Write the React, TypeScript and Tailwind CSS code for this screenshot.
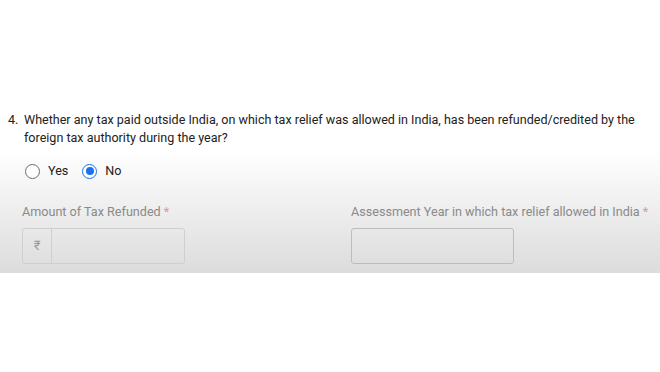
export default function App() {
  return (
    <div className="w-[660px] h-[372px] bg-white font-['Roboto','Liberation_Sans',sans-serif] overflow-hidden">
      <div className="h-[104px]" />
      <div className="h-[169px] bg-gradient-to-b from-white from-[28%] to-[#dcdcdc]">
        <div className="flex pl-[8px] pt-[7px] text-[12.55px] leading-[18px] text-[#222]">
          <span className="w-[16px] shrink-0">4.</span>
          <p>
            Whether any tax paid outside India, on which tax relief was allowed in India, has been refunded/credited by
            the foreign tax authority during the year?
          </p>
        </div>

        <div className="flex items-center gap-[8px] pl-[25px] mt-[15px] h-[18px] text-[12.6px] text-[#222]">
          <label className="flex items-center gap-[8px]">
            <span className="w-[15px] h-[15px] rounded-full border border-[#6b6b6b] bg-white" />
            <span>Yes</span>
          </label>
          <label className="flex items-center gap-[8px] ml-[6px]">
            <span className="w-[15px] h-[15px] rounded-full border-[1.5px] border-[#1a73e8] bg-white flex items-center justify-center">
              <span className="w-[8px] h-[8px] rounded-full bg-[#1a73e8]" />
            </span>
            <span>No</span>
          </label>
        </div>

        <div className="flex pl-[22px] mt-[23px]">
          <div className="w-[329px] shrink-0">
            <div className="text-[12.6px] leading-[18px] text-[#8a8a8a]">
              Amount of Tax Refunded <span className="text-[#d59a9a]">*</span>
            </div>
            <div className="mt-[7px] w-[163px] h-[36px] rounded-[3px] border border-[#cfcfcf] flex">
              <div className="w-[29px] border-r border-[#cfcfcf] flex items-center justify-center text-[13px] text-[#9a9a9a]">
                ₹
              </div>
              <div className="flex-1" />
            </div>
          </div>
          <div className="shrink-0">
            <div className="text-[12.6px] leading-[18px] text-[#8a8a8a] whitespace-nowrap">
              Assessment Year in which tax relief allowed in India <span className="text-[#d59a9a]">*</span>
            </div>
            <div className="mt-[7px] w-[163px] h-[36px] rounded-[3px] border border-[#bdbdbd]" />
          </div>
        </div>
      </div>
    </div>
  );
}
